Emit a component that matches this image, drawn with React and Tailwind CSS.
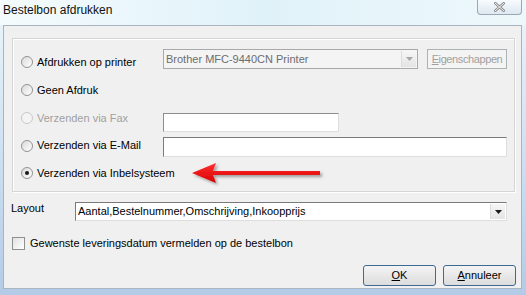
import React from 'react'

const FONT = { fontFamily: '"Liberation Sans", Arial, sans-serif' }

function Radio({ checked, disabled }) {
  return (
    <span
      className={`flex w-[12px] h-[12px] shrink-0 items-center justify-center rounded-full border ${
        disabled ? 'border-[#c8c8c8] bg-[#f4f4f4]' : 'border-[#939393] bg-gradient-to-br from-[#dadada] to-white'
      }`}
    >
      {checked && <span className="block w-[4px] h-[4px] rounded-full bg-[#1a1a1a]" />}
    </span>
  )
}

function DropBtn({ disabled }) {
  return (
    <span className="flex w-[15px] h-full shrink-0 items-center justify-center border-l border-[#dcdcdc] bg-gradient-to-b from-[#f6f6f6] to-[#e4e4e4]">
      <svg width="7" height="4" viewBox="0 0 7 4">
        <path d="M0 0h7L3.5 4z" fill={disabled ? '#a8a8a8' : '#1a1a1a'} />
      </svg>
    </span>
  )
}

function RedArrow() {
  return (
    <svg width="134" height="26" viewBox="0 0 134 26" className="shrink-0">
      <defs>
        <filter id="sh" x="-10%" y="-40%" width="120%" height="200%">
          <feDropShadow dx="2" dy="2" stdDeviation="1.5" floodColor="#000" floodOpacity="0.35" />
        </filter>
        <linearGradient id="rg" x1="0" y1="0" x2="0" y2="1">
          <stop offset="0" stopColor="#ff3030" />
          <stop offset="1" stopColor="#d80000" />
        </linearGradient>
      </defs>
      <path
        d="M1 12 L25 2 L22 10 L129 10 L129 14 L22 14 L25 22 Z"
        fill="url(#rg)"
        filter="url(#sh)"
      />
    </svg>
  )
}

export default function App() {
  return (
    <div
      className="w-[526px] h-[295px] flex flex-col bg-gradient-to-b from-[#eaf6fb] via-[#cfe2f2] to-[#b3cbe6] text-[11px] text-black overflow-hidden"
      style={FONT}
    >
      {/* title bar */}
      <div className="h-[25px] flex items-start justify-between pl-[3px] pr-[4px] bg-gradient-to-r from-[#f4fbfd] via-[#e0f2f9] to-[#eef8fb]">
        <span className="mt-[4px] text-[12px] leading-[13px] text-[#111]">Bestelbon afdrukken</span>
        <span className="flex w-[45px] h-[15px] items-center justify-center rounded-b-[4px] border border-t-0 border-[#9aa8b6] bg-gradient-to-b from-[#f8fbfd] to-[#dde8f1]">
          <svg width="11" height="10" viewBox="0 0 11 10">
            <path d="M1 1l9 8M10 1l-9 8" stroke="#8a8a8a" strokeWidth="2.6" strokeLinecap="square" />
            <path d="M1 1l9 8M10 1l-9 8" stroke="#f4f4f4" strokeWidth="1" strokeLinecap="square" />
          </svg>
        </span>
      </div>

      {/* client area */}
      <div className="ml-[3px] mr-[4px] h-[264px] flex flex-col border border-[#a9b4c0] bg-[#f0f0f0]">
        {/* group box */}
        <div className="ml-[8px] mr-[6px] mt-[12px] pt-[9px] pb-[4px] border border-[#d5d5d5] shadow-[inset_1px_1px_0_#fff,1px_1px_0_#fff] flex flex-col">
          {/* row 1 */}
          <div className="h-[28px] flex items-start">
            <label className="w-[150px] h-full shrink-0 flex items-center gap-[4px] pl-[8px]">
              <Radio />
              <span>Afdrukken op printer</span>
            </label>
            <div className="mt-[1px] w-[255px] h-[20px] flex items-center justify-between border border-[#a9a9a9] bg-[#f4f4f4] pl-[2px] pr-[1px] text-[#6d6d6d]">
              <span>Brother MFC-9440CN Printer</span>
              <span className="h-[16px] flex">
                <DropBtn disabled />
              </span>
            </div>
            <button className="ml-[9px] mt-[1px] w-[80px] h-[20px] border border-[#adb2b5] bg-[#f4f4f4] text-[#a0a0a0] leading-none tracking-[-0.4px] whitespace-nowrap">
              <span className="underline underline-offset-1">E</span>igenschappen
            </button>
          </div>

          {/* row 2 */}
          <div className="h-[28px] flex items-center gap-[4px] pl-[8px]">
            <Radio />
            <span>Geen Afdruk</span>
          </div>

          {/* row 3 */}
          <div className="h-[28px] flex items-start">
            <label className="w-[150px] h-full shrink-0 flex items-center gap-[4px] pl-[8px] text-[#a0a0a0]">
              <Radio disabled />
              <span>Verzenden via Fax</span>
            </label>
            <div className="mt-[9px] w-[176px] h-[19px] bg-white border border-t-[#8d8d8d] border-l-[#8d8d8d] border-r-[#dedede] border-b-[#dedede]" />
          </div>

          {/* row 4 */}
          <div className="h-[27px] flex items-start">
            <label className="w-[150px] h-full shrink-0 flex items-center gap-[4px] pl-[8px]">
              <Radio />
              <span>Verzenden via E-Mail</span>
            </label>
            <div className="mt-[5px] w-[344px] h-[20px] bg-white border border-t-[#7a7a7a] border-l-[#7a7a7a] border-r-[#dedede] border-b-[#dedede]" />
          </div>

          {/* row 5 */}
          <div className="h-[28px] flex items-center">
            <label className="h-full shrink-0 flex items-center gap-[4px] pl-[8px]">
              <Radio checked />
              <span>Verzenden via Inbelsysteem</span>
            </label>
            <span className="ml-[16px] mt-[1px] flex">
              <RedArrow />
            </span>
          </div>
        </div>

        {/* layout row */}
        <div className="mt-[10px] h-[19px] flex items-start pl-[7px] pr-[14px]">
          <span className="w-[64px] shrink-0 leading-[13px]">Layout</span>
          <div className="flex-1 h-[19px] flex items-center justify-between bg-white border border-t-[#7a7a7a] border-l-[#7a7a7a] border-r-[#dedede] border-b-[#dedede] pl-[2px] pr-[1px]">
            <span>Aantal,Bestelnummer,Omschrijving,Inkoopprijs</span>
            <span className="h-[15px] flex">
              <DropBtn />
            </span>
          </div>
        </div>

        {/* checkbox row */}
        <label className="mt-[14px] flex items-center gap-[5px] pl-[8px]">
          <span className="w-[13px] h-[13px] shrink-0 border border-[#8e8f8f] bg-gradient-to-br from-[#e2e2e2] to-white" />
          <span>Gewenste leveringsdatum vermelden op de bestelbon</span>
        </label>

        {/* buttons */}
        <div className="mt-[13px] flex justify-end gap-[7px] pr-[5px]">
          <button className="w-[73px] h-[21px] rounded-[3px] border border-[#3c6a93] bg-gradient-to-b from-[#f4f4f4] to-[#dcdcdc] leading-none">
            <span className="underline underline-offset-1">O</span>K
          </button>
          <button className="w-[73px] h-[21px] rounded-[3px] border border-[#3c6a93] bg-gradient-to-b from-[#f4f4f4] to-[#dcdcdc] leading-none">
            <span className="underline underline-offset-1">A</span>nnuleer
          </button>
        </div>
      </div>
    </div>
  )
}
